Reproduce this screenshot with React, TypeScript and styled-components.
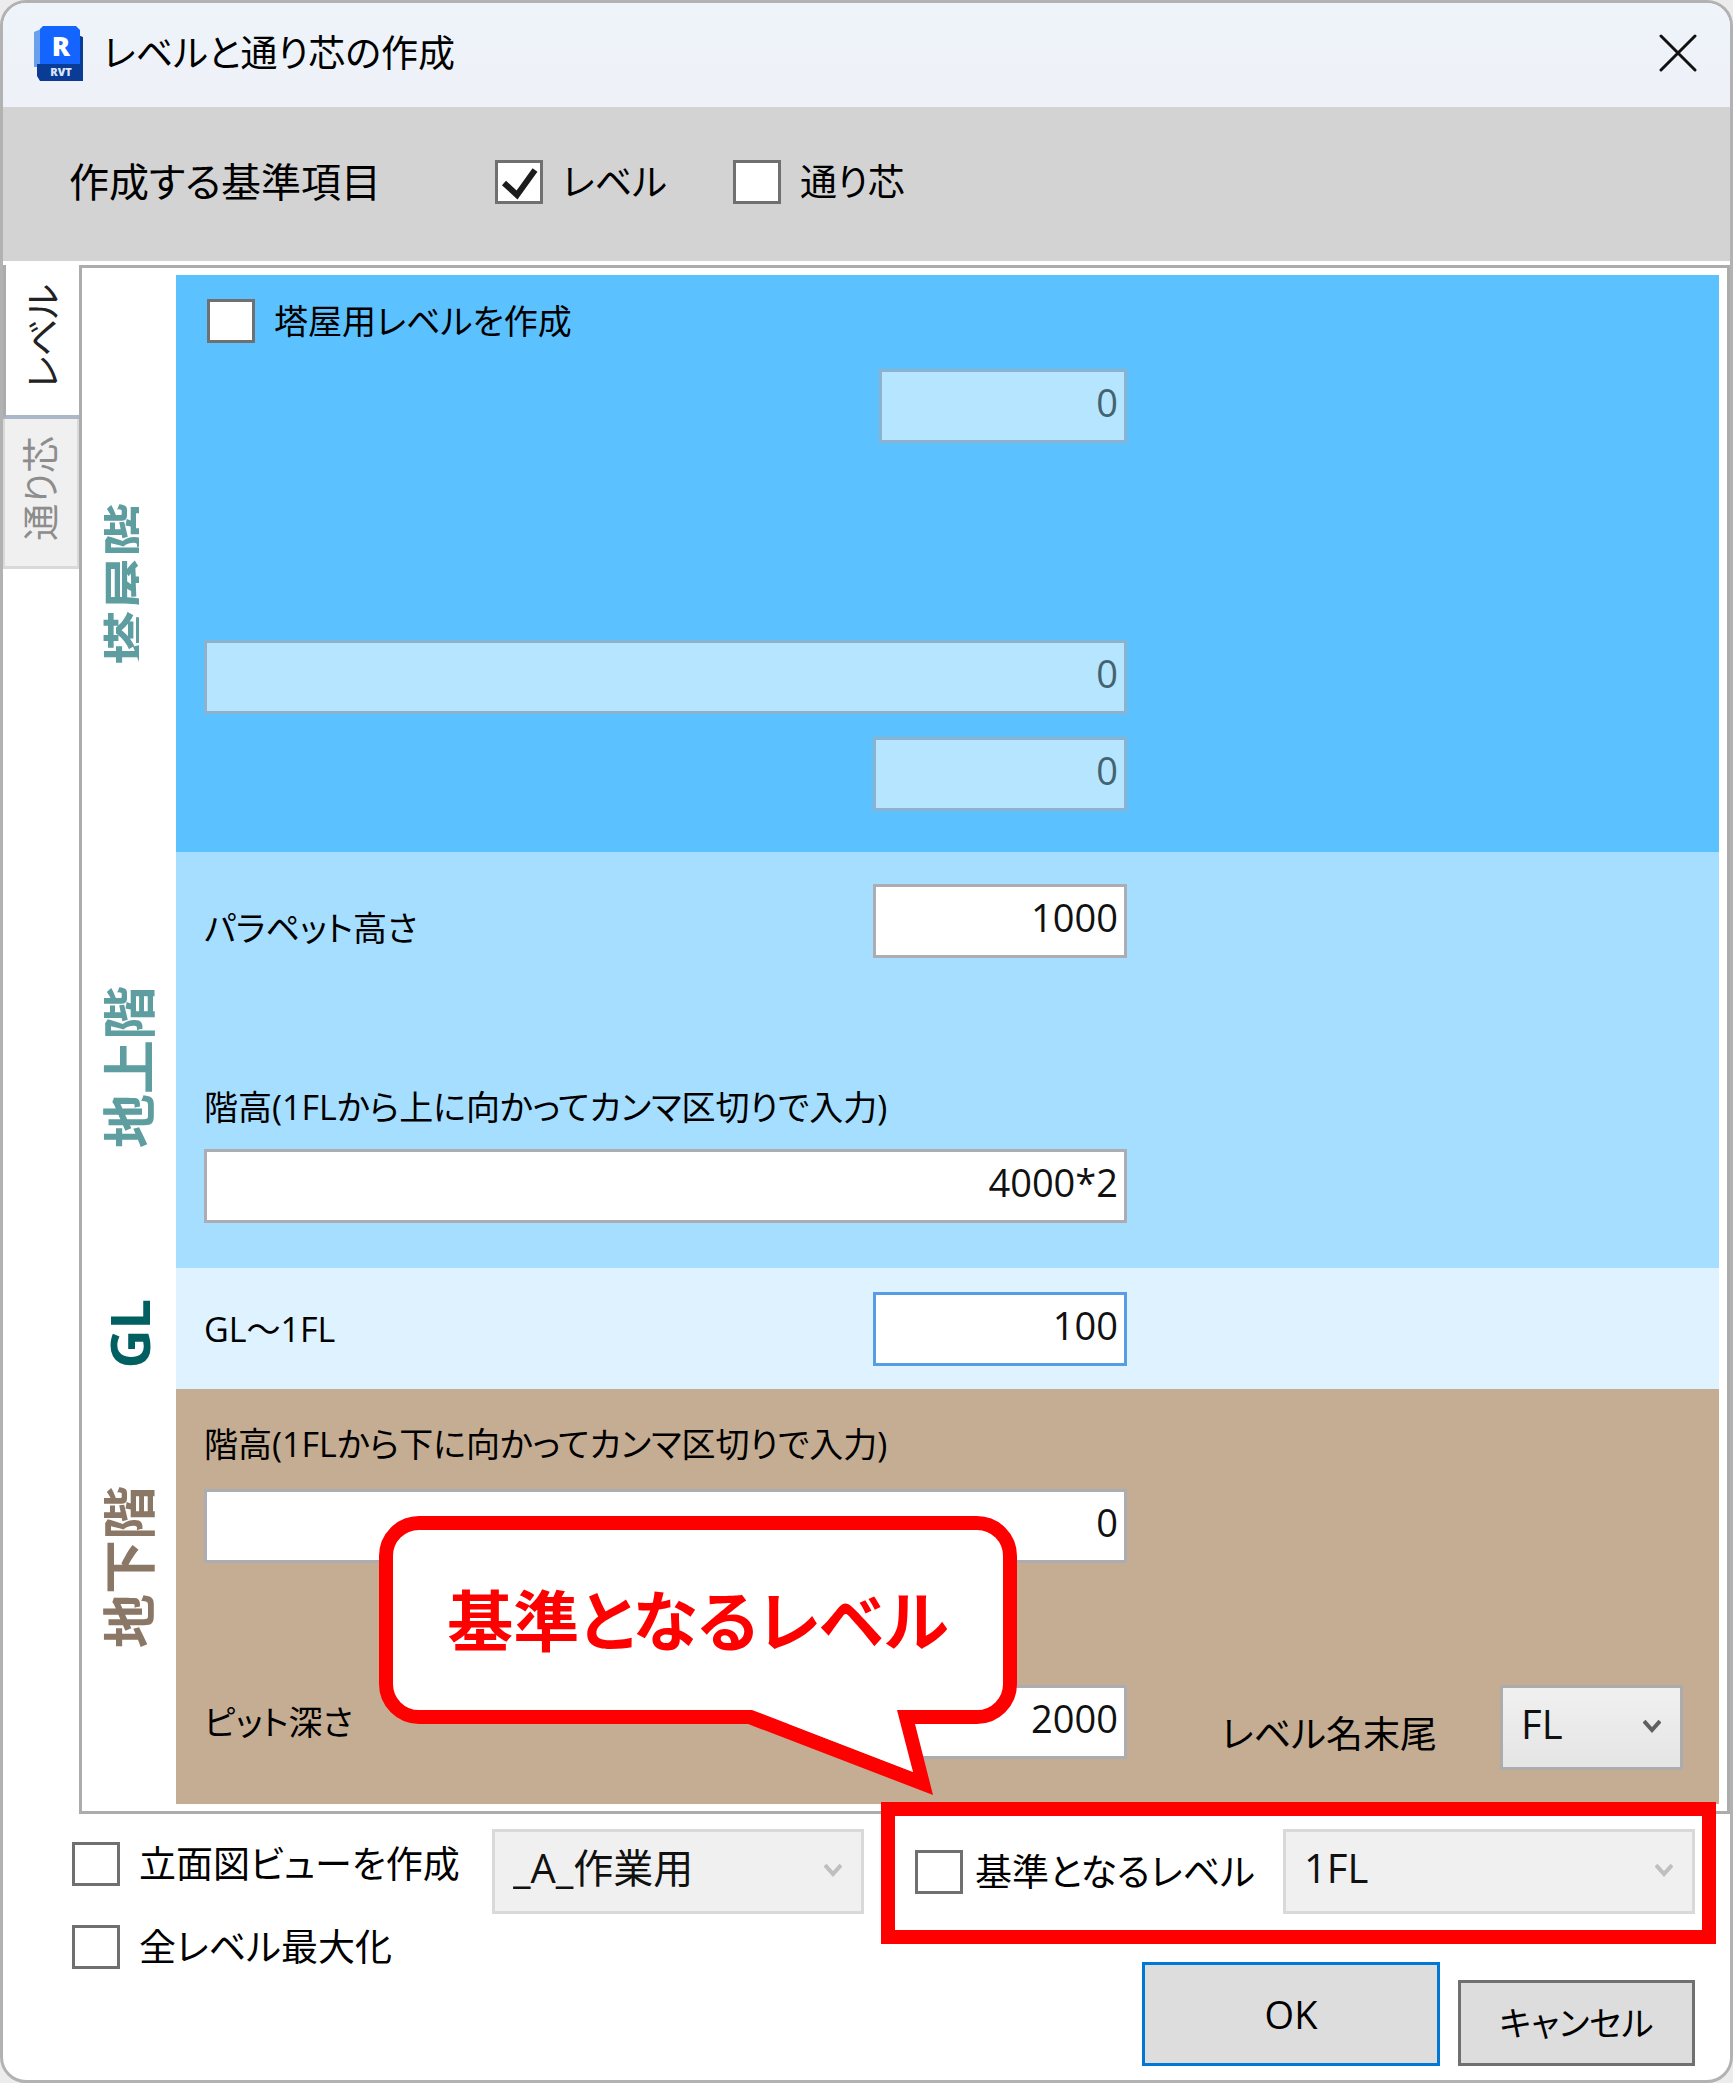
import React, { useId, useState } from "react";
import styled, { createGlobalStyle } from "styled-components";

const GlobalStyle = createGlobalStyle`
  *, *::before, *::after { box-sizing: border-box; }
  body {
    margin: 0;
    background: #ececec;
    color: #000;
    font-family: "Open Sans", "Noto Sans CJK JP", sans-serif;
    font-feature-settings: "palt";
  }
  button, input, select { font: inherit; color: inherit; margin: 0; }
`;

const Dialog = styled.main`
  display: flex;
  flex-direction: column;
  min-height: 100vh;
  border: 3px solid #b2b2b2;
  border-radius: 26px;
  background: #fff;
  overflow: hidden;
`;

const TitleBar = styled.header`
  display: flex;
  align-items: center;
  height: 104px;
  padding: 0 32px 4px 31px;
  gap: 20px;
  background: linear-gradient(#eef4f9, #eef1f8);
`;

const Title = styled.h1`
  flex: 1;
  margin: 0;
  font-size: 37px;
  font-weight: 400;
  line-height: 60px;
`;

const CloseButton = styled.button`
  display: grid;
  place-items: center;
  width: 40px;
  height: 40px;
  padding: 0;
  border: 0;
  background: none;
`;

const TargetBar = styled.section`
  display: flex;
  align-items: center;
  height: 154px;
  padding: 0 66px 4px;
  background: #d3d3d3;
  font-size: 40px;
  line-height: 60px;
`;

const TargetHeading = styled.span`
  width: 426px;
`;

const TargetOption = styled.div`
  width: 238px;
`;

const CheckRow = styled.div<{ $size?: number; $gap?: number }>`
  display: flex;
  align-items: center;
  gap: ${(p) => p.$gap ?? 19}px;
  height: 44px;
  font-size: ${(p) => p.$size ?? 37}px;
  line-height: 44px;
  white-space: nowrap;
`;

const CheckFrame = styled.span`
  display: grid;
  flex: none;
  width: 48px;
  height: 44px;
  > * { grid-area: 1 / 1; }
  svg { pointer-events: none; }
`;

const CheckInput = styled.input`
  appearance: none;
  width: 48px;
  height: 44px;
  border: 3px solid #707070;
  background: #fff;
`;

const Workspace = styled.div`
  display: grid;
  grid-template-columns: 76px minmax(0, 1fr);
  padding-top: 4px;
`;

const TabList = styled.div`
  display: flex;
  flex-direction: column;
`;

const Tab = styled.button<{ $active?: boolean }>`
  display: flex;
  align-items: center;
  justify-content: center;
  height: ${(p) => (p.$active ? 154 : 150)}px;
  padding: 0 0 8px;
  border: 0 solid ${(p) => (p.$active ? "#acacac" : "#d9d9d9")};
  border-width: ${(p) => (p.$active ? "0 0 4px 3px" : "0 2px 3px 2px")};
  border-bottom-color: ${(p) => (p.$active ? "#a9b7c8" : "#d9d9d9")};
  background: ${(p) => (p.$active ? "#fff" : "#f0f0f0")};
  color: ${(p) => (p.$active ? "#222" : "#8d8d8d")};
  font-size: 37px;
  line-height: 60px;
  span {
    writing-mode: vertical-rl;
    text-orientation: sideways;
    transform: rotate(180deg);
  }
`;

const Panel = styled.div`
  display: grid;
  grid-template-columns: 94px minmax(0, 1fr);
  padding: 7px 8px 7px 0;
  border: 3px solid #acacac;
`;

const SideCell = styled.div<{ $top: number }>`
  display: flex;
  justify-content: center;
  padding-top: ${(p) => p.$top}px;
`;

const SideLabel = styled.h2<{ $color: string; $clipped?: boolean }>`
  width: 60px;
  height: max-content;
  margin: 0;
  color: ${(p) => p.$color};
  font-size: 54px;
  font-weight: 700;
  line-height: 60px;
  white-space: nowrap;
  writing-mode: vertical-rl;
  text-orientation: sideways;
  transform: rotate(180deg);
  clip-path: ${(p) => (p.$clipped ? "inset(0 0 0 20px)" : "none")};
`;

const Band = styled.section<{ $color: string; $pad: string }>`
  display: flex;
  flex-direction: column;
  padding: ${(p) => p.$pad};
  background: ${(p) => p.$color};
  > ${CheckRow} { margin-left: 3px; }
`;

const FieldRow = styled.div<{ $space?: number; $align?: string }>`
  display: flex;
  align-items: ${(p) => p.$align ?? "center"};
  justify-content: space-between;
  width: 100%;
  max-width: 923px;
  margin-top: ${(p) => p.$space ?? 0}px;
`;

const Label = styled.label`
  font-size: 34px;
  line-height: 60px;
  white-space: nowrap;
`;

const TextBox = styled.input<{ $width?: string }>`
  width: ${(p) => p.$width ?? "254px"};
  height: 74px;
  margin-left: auto;
  padding: 0 6px 8px;
  border: 3px solid #abadb3;
  border-radius: 0;
  outline: 0;
  background: #fff;
  color: #111;
  font-size: 38px;
  text-align: right;
  &:disabled {
    border-color: #8cb3cd;
    background: #b6e5ff;
    color: #45626f;
  }
  &[data-current="true"] { border-color: #569de5; }
`;

const PitRow = styled.div`
  display: grid;
  grid-template-columns: minmax(0, 923px) minmax(0, 1fr);
  align-items: start;
  margin-top: 122px;
`;

const SuffixField = styled.div`
  display: flex;
  align-items: center;
  justify-content: space-between;
  padding: 0 36px 0 94px;
  ${Label} { font-size: 37px; padding-top: 12px; }
`;

const SelectFrame = styled.span<{ $width: number }>`
  display: grid;
  flex: none;
  align-items: center;
  width: ${(p) => p.$width}px;
  height: 85px;
  > * { grid-area: 1 / 1; }
  svg {
    justify-self: end;
    margin: 0 22px 4px 0;
    pointer-events: none;
  }
`;

const SelectBox = styled.select`
  appearance: none;
  width: 100%;
  height: 100%;
  padding: 0 48px 8px 18px;
  border: 3px solid #acacac;
  border-radius: 0;
  background: linear-gradient(#f0f0f0, #e5e5e5);
  color: #111;
  font-size: 40px;
  &:disabled {
    border-color: #d9d9d9;
    background: #f0f0f0;
    color: #111;
    opacity: 1;
  }
`;

const Footer = styled.footer`
  display: grid;
  grid-template-columns: 420px 372px minmax(0, 1fr);
  grid-template-rows: 85px 104px;
  row-gap: 48px;
  padding: 15px 35px 13px 69px;
`;

const ViewOptions = styled.div`
  display: flex;
  flex-direction: column;
  grid-row: 1 / 3;
  gap: 39px;
  padding-top: 13px;
`;

const BaseLevel = styled.div`
  position: relative;
  display: flex;
  align-items: center;
  justify-content: space-between;
  margin-left: 51px;
`;

const Highlight = styled.div`
  position: absolute;
  inset: -27px -21px -30px -34px;
  border: 14px solid #f00;
  pointer-events: none;
`;

const Callout = styled.div`
  position: absolute;
  left: -536px;
  bottom: 190px;
  display: grid;
  place-items: center;
  width: 638px;
  height: 208px;
  border: 14px solid #f00;
  border-radius: 40px;
  background: #fff;
  color: #f00;
  font-size: 66px;
  font-weight: 700;
  line-height: 100px;
  white-space: nowrap;
  pointer-events: none;
`;

const CalloutTail = styled.svg`
  position: absolute;
  left: 355px;
  top: 180px;
`;

const Actions = styled.div`
  display: flex;
  grid-column: 2 / 4;
  align-items: flex-end;
  justify-content: flex-end;
  gap: 18px;
`;

const ActionButton = styled.button<{ $primary?: boolean }>`
  width: ${(p) => (p.$primary ? 298 : 237)}px;
  height: ${(p) => (p.$primary ? 104 : 86)}px;
  padding: 0;
  border: 3px solid ${(p) => (p.$primary ? "#0078d7" : "#707070")};
  border-radius: 0;
  background: #ddd;
  font-size: ${(p) => (p.$primary ? 38 : 34)}px;
  line-height: 60px;
`;

function RevitLogo() {
  return (
    <svg width="49" height="55" viewBox="0 0 49 55" aria-hidden="true">
      <path d="M0 6 L7 3 V41 H0 Z" fill="#6aa0ee" />
      <path d="M44 9 L49 11 V55 H6 L3 50 V38 H44 Z" fill="#0a3c96" />
      <path d="M9 0 H42 L46 4 V38 H6 V3 Z" fill="#1464ff" />
      <text x="27" y="30" textAnchor="middle" fontSize="27" fontWeight="800" fill="#fff">R</text>
      <text x="27" y="50" textAnchor="middle" fontSize="11" fontWeight="800" fill="#dbe6fa">RVT</text>
    </svg>
  );
}

function Chevron({ color }: { color: string }) {
  return (
    <svg width="18" height="14" viewBox="0 0 18 14" aria-hidden="true">
      <path d="M1 2 L9 11 L17 2" fill="none" stroke={color} strokeWidth="4" />
    </svg>
  );
}

type CheckProps = { label: string; initial?: boolean; size?: number; gap?: number };

function Check({ label, initial = false, size, gap }: CheckProps) {
  const id = useId();
  const [on, setOn] = useState(initial);
  return (
    <CheckRow $size={size} $gap={gap}>
      <CheckFrame>
        <CheckInput id={id} type="checkbox" checked={on} onChange={() => setOn(!on)} />
        {on && (
          <svg width="48" height="44" viewBox="0 0 48 44" aria-hidden="true">
            <path d="M9 23 L22 35 L40 10" fill="none" stroke="#1c1c1c" strokeWidth="6" />
          </svg>
        )}
      </CheckFrame>
      <label htmlFor={id}>{label}</label>
    </CheckRow>
  );
}

type PickerProps = { id?: string; name: string; value: string; width: number; disabled?: boolean };

function Picker({ id, name, value, width, disabled }: PickerProps) {
  return (
    <SelectFrame $width={width}>
      <SelectBox id={id} aria-label={name} disabled={disabled} defaultValue={value}>
        <option>{value}</option>
      </SelectBox>
      <Chevron color={disabled ? "#bfbfbf" : "#606060"} />
    </SelectFrame>
  );
}

export default function App() {
  return (
    <>
      <GlobalStyle />
      <Dialog>
        <TitleBar>
          <RevitLogo />
          <Title>レベルと通り芯の作成</Title>
          <CloseButton aria-label="閉じる">
            <svg width="38" height="38" viewBox="0 0 38 38" aria-hidden="true">
              <path d="M2 2 L36 36 M36 2 L2 36" stroke="#111" strokeWidth="3" strokeLinecap="round" />
            </svg>
          </CloseButton>
        </TitleBar>

        <TargetBar>
          <TargetHeading>作成する基準項目</TargetHeading>
          <TargetOption><Check label="レベル" initial /></TargetOption>
          <TargetOption><Check label="通り芯" /></TargetOption>
        </TargetBar>

        <Workspace>
          <TabList role="tablist">
            <Tab $active role="tab" aria-selected="true"><span>レベル</span></Tab>
            <Tab role="tab" aria-selected="false"><span>通り芯</span></Tab>
          </TabList>

          <Panel role="tabpanel">
            <SideCell $top={228}><SideLabel $color="#5f9ea0" $clipped>塔屋階</SideLabel></SideCell>
            <Band $color="#5bc2ff" $pad="24px 28px 41px">
              <Check label="塔屋用レベルを作成" size={34} />
              <FieldRow $space={26}><TextBox $width="248px" aria-label="塔屋パラペット高さ" defaultValue="0" disabled /></FieldRow>
              <FieldRow $space={197}><TextBox $width="100%" aria-label="塔屋階高" defaultValue="0" disabled /></FieldRow>
              <FieldRow $space={23}><TextBox aria-label="塔屋床高さ" defaultValue="0" disabled /></FieldRow>
            </Band>

            <SideCell $top={134}><SideLabel $color="#5f9ea0">地上階</SideLabel></SideCell>
            <Band $color="#a6deff" $pad="32px 28px 45px">
              <FieldRow $align="flex-end">
                <Label htmlFor="parapet">パラペット高さ</Label>
                <TextBox id="parapet" defaultValue="1000" />
              </FieldRow>
              <FieldRow $space={119}><Label htmlFor="above">階高(1FLから上に向かってカンマ区切りで入力)</Label></FieldRow>
              <FieldRow $space={12}><TextBox $width="100%" id="above" defaultValue="4000*2" /></FieldRow>
            </Band>

            <SideCell $top={31}><SideLabel $color="#005f60">GL</SideLabel></SideCell>
            <Band $color="#def2ff" $pad="24px 28px 23px">
              <FieldRow>
                <Label htmlFor="ground">GL～1FL</Label>
                <TextBox id="ground" data-current="true" defaultValue="100" />
              </FieldRow>
            </Band>

            <SideCell $top={97}><SideLabel $color="#8b7765">地下階</SideLabel></SideCell>
            <Band $color="#c5ad93" $pad="25px 0 34px 28px">
              <FieldRow><Label htmlFor="below">階高(1FLから下に向かってカンマ区切りで入力)</Label></FieldRow>
              <FieldRow $space={15}><TextBox $width="100%" id="below" defaultValue="0" /></FieldRow>
              <PitRow>
                <FieldRow>
                  <Label htmlFor="pit">ピット深さ</Label>
                  <TextBox id="pit" defaultValue="2000" />
                </FieldRow>
                <SuffixField>
                  <Label htmlFor="suffix">レベル名末尾</Label>
                  <Picker id="suffix" name="レベル名末尾" value="FL" width={183} />
                </SuffixField>
              </PitRow>
            </Band>
          </Panel>
        </Workspace>

        <Footer>
          <ViewOptions>
            <Check label="立面図ビューを作成" />
            <Check label="全レベル最大化" />
          </ViewOptions>
          <Picker name="ビュータイプ" value="_A_作業用" width={372} disabled />
          <BaseLevel>
            <Check label="基準となるレベル" gap={12} />
            <Picker name="基準となるレベル" value="1FL" width={412} disabled />
            <Highlight />
            <Callout>
              基準となるレベル
              <CalloutTail width="190" height="90" viewBox="0 0 190 90" aria-hidden="true">
                <path d="M0 14 L185 85 L167 14 H149 L165 62 L4 0 Z" fill="#f00" />
                <path d="M4 0 H149 L165 62 Z" fill="#fff" />
              </CalloutTail>
            </Callout>
          </BaseLevel>
          <Actions>
            <ActionButton $primary>OK</ActionButton>
            <ActionButton>キャンセル</ActionButton>
          </Actions>
        </Footer>
      </Dialog>
    </>
  );
}
